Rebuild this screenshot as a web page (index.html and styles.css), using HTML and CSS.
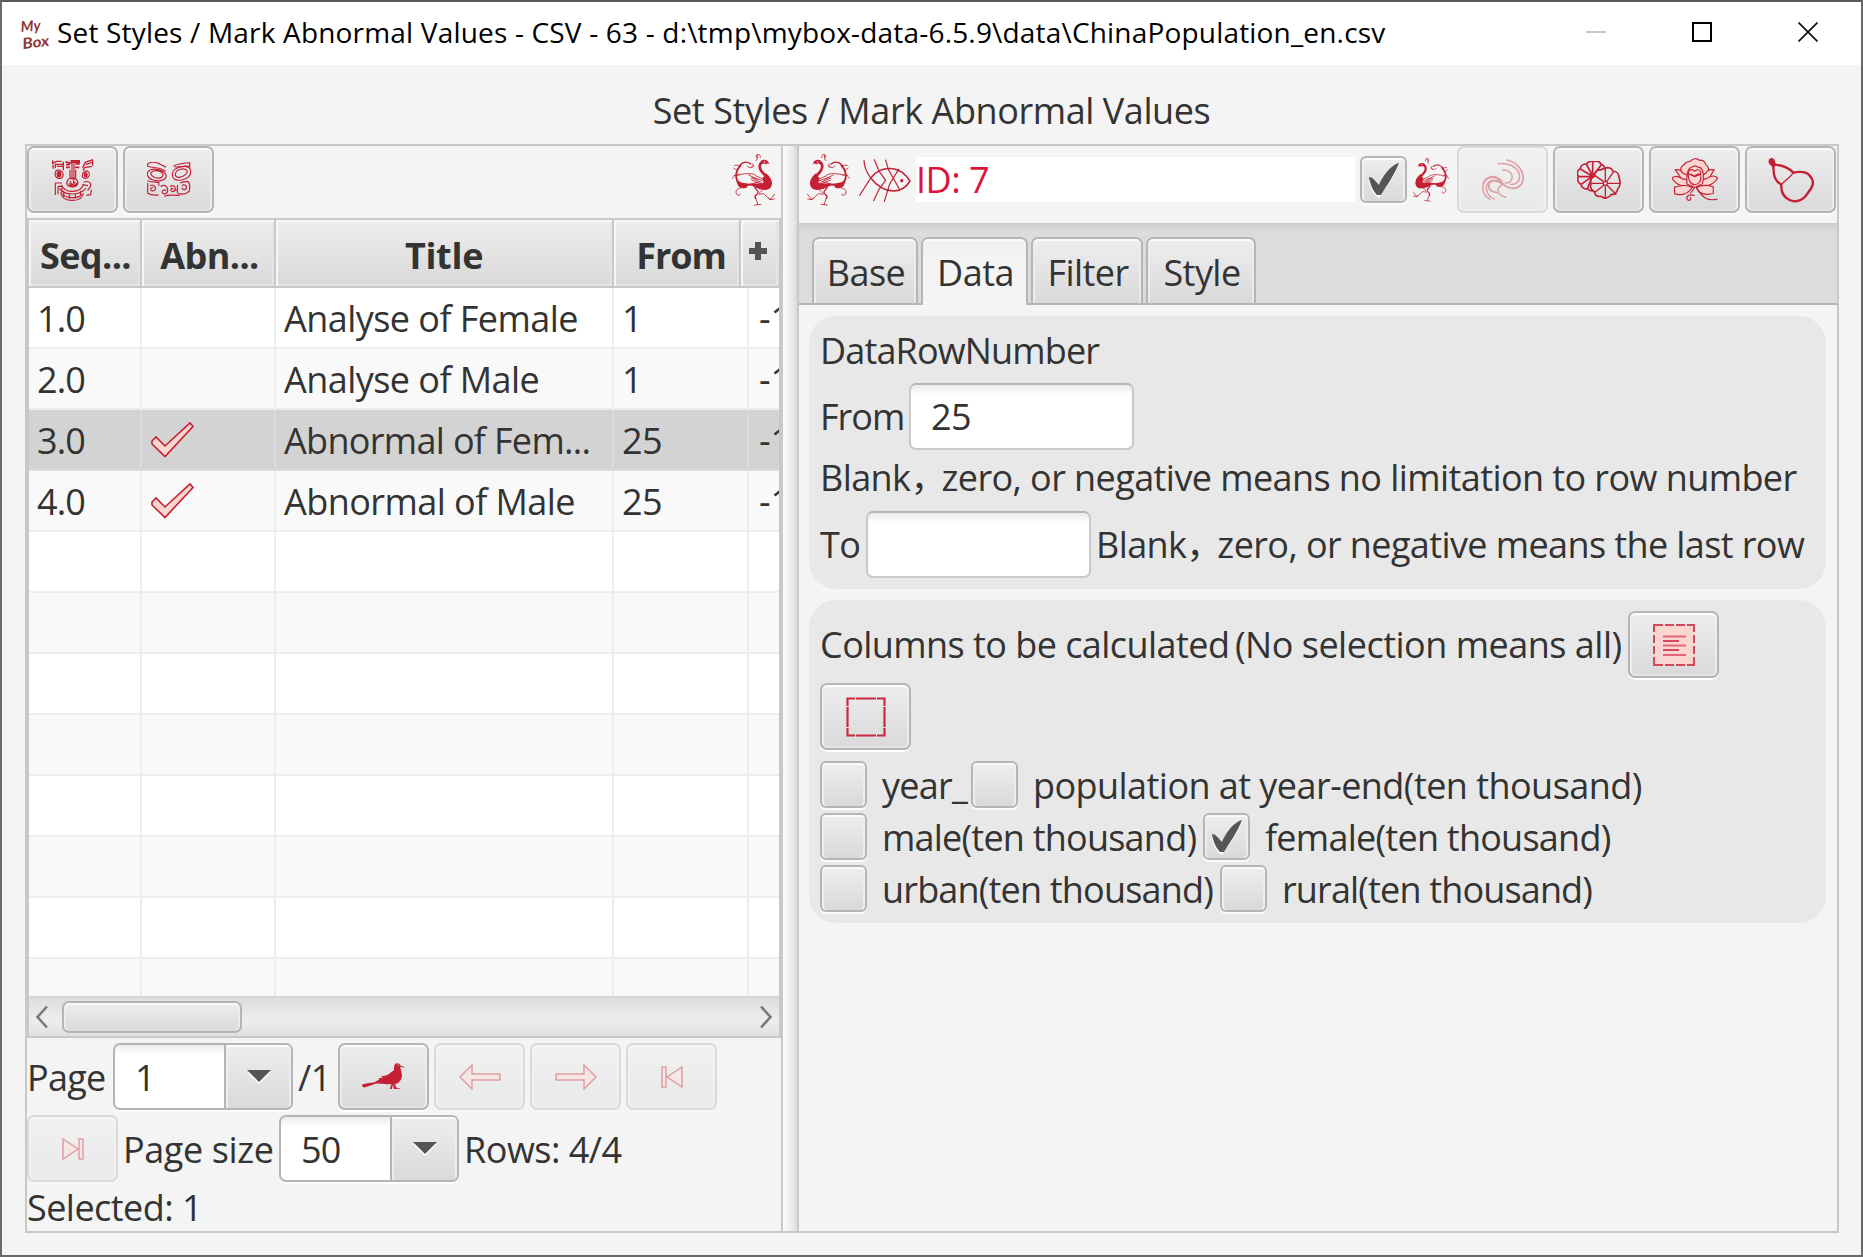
FILE: index.html
```html
<!DOCTYPE html>
<html lang="en">
<head>
<meta charset="utf-8">
<title>Set Styles / Mark Abnormal Values</title>
<link rel="stylesheet" href="styles.css">
</head>
<body>
<svg class="defs" width="0" height="0">
  <defs>
    <symbol id="phoenix" viewBox="0 0 128 156">
      <g fill="none" stroke="#c41f33" stroke-linecap="round">
        <path stroke-width="2.6" d="M44 11c-3-6 3-11 9-9 5 2 4 8 0 10M51 2c4 5-2 11 5 18M18 29l10-7 10 3M66 35c3 8 12 8 17 1M70 40c-9 0-8-8-3-11"/>
        <path stroke-width="8" d="M37 24c11 6 10 17 4 26-6 9-14 14-18 24"/>
        <path stroke-width="4" d="M72 30c12-10 28-6 34 7"/>
        <path stroke-width="6" d="M103 34c13 14 17 34 8 52"/>
        <path stroke-width="6" d="M25 90c22 4 52-2 78 5"/>
        <path stroke-width="2.600" d="M104 37c4-3 10-4 16-3M113 50l10-8M102 102c14 0 19 14 10 21-5 3-9 0-8-3M107 64c8-5 17 3 20 9"/>
        <path stroke-width="2.600" d="M60 62c19-7 37-1 62 2M34 76l24-11M37 80l29-10M40 85l31-13M43 89l27-11M48 84l31 8M53 76l25-13"/>
        <path stroke-width="4" d="M60 100c-5 11-13 10-9 18 6 7 12 6 7 15"/>
        <path stroke-width="2.600" d="M58 130l-7 21 10 3M42 151l10 1M33 101c6 9 6 10 13 15M48 121l-14-2-20 18-13-16M14 137l-12-2M14 137l4-5"/>
      </g>
      <path fill="#c41f33" d="M18 25c5-8 16-10 24-4l2 10-8-3-10 3z M27 57c-17 13-23 31-15 43 8 12 30 8 44 1l16-7-22-4-16-3 3-16-4-3z M78 91c17-7 26-1 34-15 4 24-11 30-27 25z"/>
      <circle cx="31" cy="24" r="2" fill="#f4f4f4"/>
    </symbol>
    <symbol id="tick" viewBox="0 0 32 36"><path fill="#fff" d="M1 19c4-1 7 4 9 8C15 16 23 5 31 2c-4 11-12 23-20 34C6 33 2 26 1 19z"/><path fill="#555" d="M1 15c4 0 7 5 10 8C15 13 23 3 31 1c-4 11-12 22-18 32h-4C5 29 2 22 1 15z"/></symbol>
    <symbol id="mark" viewBox="0 0 46 38"><path fill="#fbd5d0" stroke="#c41f33" stroke-width="1.600" d="M2 20l4-4 9 9L40 2l3 3.500-28 30L2 23z"/></symbol>
    <symbol id="arrow" viewBox="0 0 42 26"><path fill="#fbd5d0" stroke="#c41f33" stroke-width="1.500" d="M1 13 13 1v9h28v6H13v9z"/></symbol>
    <symbol id="edge" viewBox="0 0 22 22"><path fill="#fbd5d0" stroke="#c41f33" stroke-width="1.500" d="M1 1h4v20H1zM21 1v20L6 11z"/></symbol>
  </defs>
</svg>

<div class="window">
  <header class="titlebar">
    <svg class="logo" viewBox="0 0 32 32" aria-hidden="true"><g font-family="Lato, sans-serif" font-style="italic" font-weight="700" fill="#8f3434"><text x="2" y="14" font-size="15" textLength="20" lengthAdjust="spacingAndGlyphs" transform="rotate(-4 2 14)">My</text><text x="4" y="31" font-size="15" textLength="27" lengthAdjust="spacingAndGlyphs" transform="rotate(-7 4 31)">Box</text></g></svg>
    <span class="caption">Set Styles / Mark Abnormal Values - CSV - 63 - d:\tmp\mybox-data-6.5.9\data\ChinaPopulation_en.csv</span>
    <div class="window-buttons">
      <svg viewBox="0 0 20 20"><path d="M0 10h20" stroke="#c8c8c8" stroke-width="2"/></svg>
      <svg viewBox="0 0 20 20"><path d="M1 1h18v18H1z" fill="none" stroke="#000" stroke-width="2"/></svg>
      <svg viewBox="0 0 20 20"><path d="M.5.5l19 19M19.500.5l-19 19" stroke="#111" stroke-width="1.700"/></svg>
    </div>
  </header>
  <h1 class="heading">Set Styles / Mark Abnormal Values</h1>

  <main class="split">
    <section class="left">
      <div class="toolbar">
        <button class="btn"><svg width="42" height="42" viewBox="0 0 126 126"><g fill="none" stroke="#c41f33" stroke-width="4">
          <path d="M2 4v9l12-6h15M3 17v12M10 14v14M12 16h20M14 22h18M34 8v26M123 2l-23 8-8 16M122 9l-20 8M120 22l-22 4-5 8M122 4v16"/>
          <path stroke-width="5" d="M40 10c8-4 10 5 17 2s14-6 27 1M42 17h12M42 25h12M70 15h13M68 25h14"/>
          <path stroke-width="3.500" d="M54 32v28M60 14v48M66 14v48M71 32v26M48 62c-8 12-2 20 12 22 15 1 22-12 14-22-4-5-20-7-26 0zM54 66l6 12 10-9M66 61l-3 19"/>
          <path stroke-width="3.500" d="M10 36c10-6 20-2 23 8 2 12-8 18-18 12-6-4-7-12-3-20M91 50c0-12 10-18 18-12 7 7 2 18-7 20-8 0-11-4-11-8"/>
          <path stroke-width="3.500" d="M10 72h20M10 72v36M18 82h12v20M18 82v24M95 70c15-7 25 3 20 13l-8 11M91 77l17 3M118 92l-2 15-13 2"/>
          <path stroke-width="3.500" d="M28 78c8 17 20 20 34 19 16 0 26-4 32-19M22 88c10 16 26 17 40 17s28-4 40-17M26 100c4 20 22 25 36 24 16 0 30-6 32-22M32 105c8 10 18 11 30 11s22-2 27-10M35 96v17M52 103v16M70 103v15M86 96v15"/></g><g fill="#c41f33"><ellipse cx="21" cy="46" rx="7" ry="10"/><ellipse cx="101" cy="47" rx="6" ry="8"/><path d="M52 70l10 10 14-10v10l-12 5-12-4zM55 3h29v10H57z"/></g></svg></button>
        <button class="btn"><svg width="44" height="35" viewBox="0 0 130 103"><g fill="none" stroke="#c41f33" stroke-width="3.500">
          <path d="M2 14V5C12-1 28 0 42 8l14 7M3 13l36 6 16 8M78 12c13-8 31-9 48-10v14M82 14c14 3 29-5 43-1"/>
          <path d="M3 28c12-14 50-5 54 13-2 16-28 18-44 10C2 47-1 36 3 28zM13 30c10-9 33-4 34 8-1 11-16 12-27 6-8-4-11-10-7-14M75 34c5-22 47-28 53-12 4 18-7 28-26 31-19 3-29-4-27-19zM84 34c3-13 26-18 33-10 7 8-9 20-22 21-10 1-12-6-11-11"/>
          <path d="M1 55c11 6 26 3 34 5v10M2 62v30c10 6 24 6 32 5M9 70c8-6 18 2 16 10-3 8-14 6-14 0 0-4 5-6 8-4M40 72c12-7 22 0 21 13-1 10-15 12-16 4 0-7 8-9 11-4M68 72c8-6 17 0 15 9-4 11-14 6-12-1 1-4 6-3 6 1M90 68v24M83 84l9-3M92 93c12 3 26 0 34-8M103 69c8-4 16 0 13 8-4 8-14 4-12-2M119 56c8 5 8 18 6 28M98 62c8-5 17-4 24-4M51 101c14-6 28-2 47-3"/></g></svg></button>
        <svg class="bird flip push" width="43" height="52"><use href="#phoenix"/></svg>
      </div>
      <div class="table">
        <div class="thead"><div class="th c1">Seq...</div><div class="th c2">Abn...</div><div class="th c3">Title</div><div class="th c4">From</div><div class="th c5"><svg width="18" height="18"><path d="M9 0v18M0 9h18" stroke="#555" stroke-width="6"/></svg></div></div>
        <div class="tbody">
          <div class="tr"><div class="td c1">1.0</div><div class="td c2"></div><div class="td c3">Analyse of Female</div><div class="td c4">1</div><div class="td c5">-1</div></div>
          <div class="tr"><div class="td c1">2.0</div><div class="td c2"></div><div class="td c3">Analyse of Male</div><div class="td c4">1</div><div class="td c5">-1</div></div>
          <div class="tr selected"><div class="td c1">3.0</div><div class="td c2"><svg width="46" height="38"><use href="#mark"/></svg></div><div class="td c3 cut">Abnormal of Fem...</div><div class="td c4">25</div><div class="td c5">-1</div></div>
          <div class="tr"><div class="td c1">4.0</div><div class="td c2"><svg width="46" height="38"><use href="#mark"/></svg></div><div class="td c3">Abnormal of Male</div><div class="td c4">25</div><div class="td c5">-1</div></div>
          <div class="tr"><div class="td c1"></div><div class="td c2"></div><div class="td c3"></div><div class="td c4"></div><div class="td c5"></div></div>
          <div class="tr"><div class="td c1"></div><div class="td c2"></div><div class="td c3"></div><div class="td c4"></div><div class="td c5"></div></div>
          <div class="tr"><div class="td c1"></div><div class="td c2"></div><div class="td c3"></div><div class="td c4"></div><div class="td c5"></div></div>
          <div class="tr"><div class="td c1"></div><div class="td c2"></div><div class="td c3"></div><div class="td c4"></div><div class="td c5"></div></div>
          <div class="tr"><div class="td c1"></div><div class="td c2"></div><div class="td c3"></div><div class="td c4"></div><div class="td c5"></div></div>
          <div class="tr"><div class="td c1"></div><div class="td c2"></div><div class="td c3"></div><div class="td c4"></div><div class="td c5"></div></div>
          <div class="tr"><div class="td c1"></div><div class="td c2"></div><div class="td c3"></div><div class="td c4"></div><div class="td c5"></div></div>
          <div class="tr"><div class="td c1"></div><div class="td c2"></div><div class="td c3"></div><div class="td c4"></div><div class="td c5"></div></div>
        </div>
        <div class="scrollbar">
          <svg width="12" height="24"><path d="M11 1.500 1.500 12 11 22.500" fill="none" stroke="#777" stroke-width="2.500"/></svg>
          <div class="thumb"></div>
          <svg width="12" height="24"><path d="M1 1.500 10.500 12 1 22.500" fill="none" stroke="#777" stroke-width="2.500"/></svg>
        </div>
      </div>
      <div class="pager">
        <div class="line">
          <span class="label page">Page</span>
          <div class="combo"><span>1</span><i><svg width="24" height="14"><path d="M0 2h24L12 14z" fill="#fff"/><path d="M0 0h24L12 12z" fill="#555"/></svg></i></div>
          <span class="label total">/1</span>
          <button class="btn"><svg width="44" height="27" viewBox="0 0 130 78"><path fill="#c41f33" d="M0 63l12-3 25-4 14-8-3-2 14-5-7-2 18-4c10-4 13-10 21-14 2-6-1-14 4-19 5-4 14-2 15 4l17 8-17-4c2 12 7 22 4 34-4 10-11 16-20 18l6 12h10l-2 2H94l-2-14-4 14h-6l5-15c-15 2-30-1-45-1L10 71c-6 1-10-1-10-8z"/><circle cx="107" cy="5" r="1.500" fill="#eee"/></svg></button>
          <button class="btn" disabled><svg width="42" height="26"><use href="#arrow"/></svg></button>
          <button class="btn" disabled><svg class="flip" width="42" height="26"><use href="#arrow"/></svg></button>
          <button class="btn" disabled><svg width="22" height="22"><use href="#edge"/></svg></button>
        </div>
        <div class="line">
          <button class="btn" disabled><svg class="flip" width="22" height="22"><use href="#edge"/></svg></button>
          <span class="label size">Page size</span>
          <div class="combo"><span>50</span><i><svg width="24" height="14"><path d="M0 2h24L12 14z" fill="#fff"/><path d="M0 0h24L12 12z" fill="#555"/></svg></i></div>
          <span class="label rows">Rows: 4/4</span>
        </div>
        <div class="status">Selected: 1</div>
      </div>
    </section>
    <div class="divider"></div>

    <section class="right">
      <div class="idbar">
        <svg class="bird" width="43" height="52"><use href="#phoenix"/></svg>
        <svg class="fish" width="52" height="44" viewBox="0 0 156 132"><g fill="none" stroke="#c41f33" stroke-linecap="round"><path stroke-width="4.500" d="M35 57C50 37 75 27 102 29c25 3 39 18 51 37-12 20-29 30-50 30-27 0-50-16-68-39z"/><path stroke-width="3.500" d="M15 4c0 22 7 35 20 53L2 109M46 2l15 36 19 26-20 27-16 34M80 3l8 28 33 59M119 31L92 75l-16 53"/></g><circle cx="128" cy="65" r="5" fill="#c41f33"/></svg>
        <div class="idtext">ID: 7</div>
        <span class="check"><svg width="32" height="36"><use href="#tick"/></svg></span>
        <svg class="smallbird" width="36" height="44"><use href="#phoenix"/></svg>
        <button class="btn" disabled><svg width="42" height="42" viewBox="0 0 126 126"><g fill="none" stroke="#c41f33" stroke-width="4.500" stroke-linecap="round"><path stroke-width="5" d="M74 3c35 7 55 38 48 63-4 20-27 27-46 18-14-7-25-21-43-18-15 4-17 22-4 30l15 5"/><path d="M48 14c31-4 59 10 64 33 4 18-8 31-26 29M62 33c19-2 33 11 27 28-3 8-11 12-20 10M62 73c-22-28-50-19-58 3-5 18 3 37 20 45M59 66C38 43 12 53 3 73M52 69c-20-13-39 0-39 18 0 15 10 28 24 33M65 76c-13 3-22 16-14 28 5 7 12 9 20 11"/></g></svg></button>
        <button class="btn"><svg width="44" height="38" viewBox="0 0 132 114"><g fill="none" stroke="#c41f33" stroke-width="5"><path d="M49 2c9-3 19-1 24 8 9 3 10 9 12 15M49 2c-8-3-17 1-20 7-11-1-18 6-19 14-10 5-11 16-6 23-5 11 0 20 8 24 1 10 12 16 20 13 5 8 13 7 17 4M47 3v45M28 9l19 36M10 24l34 20M4 47h42M12 70l30-21M31 84l13-33M74 10L50 42"/><path d="M84 22c10-5 20-1 24 8 11 1 18 9 18 19 5 12 4 28-4 35-2 15-13 17-19 16-8 13-22 14-30 6-14 2-20-4-21-14-11-3-13-16-10-24-4-12 3-20 10-22 1-15 9-20 19-19 4-3 9-5 13-5z"/><circle cx="85" cy="67" r="6" stroke-width="4"/><path stroke-width="4" d="M85 61V22M89 62l21-30M92 67h38M90 72l28 29M85 73v37M81 72l-27 22M78 67H43M80 62L53 43"/></g></svg></button>
        <button class="btn"><svg width="46" height="44" viewBox="0 0 136 128"><g fill="#fbd5d0" stroke="#c41f33" stroke-width="3.400" stroke-linejoin="round"><path d="M34 49C22 39 24 24 36 18c4-8 12-8 18-9 6-9 20-11 27-3 8-3 18 4 18 12 9 4 12 18 5 28L70 78z"/><path d="M50 75C26 70 22 46 9 34 20 32 28 37 31 43c10 2 20 12 24 30zM81 75c2-16 9-27 20-32 3-7 11-11 24-9-11 11-8 29-44 41z"/><path d="M60 83C38 86 11 80 0 58c9-8 21-4 29 2 16 1 26 10 31 23zM75 83c4-16 15-22 29-24 10-7 22-10 31-1-11 21-39 28-60 25z"/><path d="M60 86c-14 22-37 24-52 19l-1-20c17-5 37-8 53 1zM72 86c16-8 35-7 50-2v20c-22 5-43 1-50-18z"/><path d="M44 76c-1-21-1-35 7-46l16-8 19 7c8 11 8 30 4 46l-23 11z"/><path d="M48 47c7-2 12 1 18 6 8-7 13-8 19-5 3 17-5 29-17 30-13 0-21-14-20-31zM48 45c0-10 7-14 15-10l4 3 7-4c9-2 12 7 10 13l-17 7z"/></g><path fill="none" stroke="#c41f33" stroke-width="3.400" d="M66 85c0 9-7 10-12 19M72 85c7 13 14 26 29 34 12 6 22 4 34 1M67 110c-18-6-27 3-22 12 8 6 14-3 8-7"/></svg></button>
        <button class="btn"><svg width="46" height="46" viewBox="0 0 138 138"><g fill="none" stroke="#c41f33" stroke-linejoin="round"><path stroke-width="7" d="M15 23c20 0 41 3 61 24 20-5 41-2 49 9 13 14 11 29 3 40l-15 21c-9 11-24 16-35 16-17-1-35-17-37-34l-2-17C27 76 20 62 18 52z"/><path stroke-width="4" d="M41 82c11-12 19-15 36-35"/></g><path fill="#c41f33" d="M3 7l8-5 8 5 4 13-5 13-9-7c-7-4-9-13-6-19z"/></svg></button>
      </div>

      <nav class="tabs"><div class="tab t1">Base</div><div class="tab t2 active">Data</div><div class="tab t3">Filter</div><div class="tab t4">Style</div></nav>

      <div class="content">
        <div class="card rownums">
          <div class="row r1">DataRowNumber</div>
          <div class="row r2"><span class="from">From</span><div class="field">25</div></div>
          <div class="row r3"><span>Blank<span class="comma">，</span>zero, or negative means no limitation to row number</span></div>
          <div class="row r4"><span class="to">To</span><div class="field"></div><span class="last">Blank<span class="comma">，</span>zero, or negative means the last row</span></div>
        </div>
        <div class="card columns">
          <div class="row head"><span class="calc">Columns to be calculated</span><span class="hint">(No selection means all)</span>
            <button class="btn"><svg width="42" height="42"><path d="M1 1h40v40H1z" fill="#fbd5d0"/><path d="M1 8V1h9M12 1h9M23 1h9M34 1h7v7M41 11v8M41 22v8M41 33v8h-7M32 41h-9M21 41h-9M10 41H1v-8M1 30v-8M1 19v-8" fill="none" stroke="#d1495b" stroke-width="2"/><path d="M10 12.500h23M10 21.500h23M10 31h23" stroke="#df6672" stroke-width="2"/><path d="M10 17h16M10 26h16" stroke="#c41f33" stroke-width="1.300"/></svg></button>
          </div>
          <div class="row single"><button class="btn"><svg width="40" height="40"><path d="M1.500 9V1.500H9M10 1.500h20M31 1.500h7.500V9M38.500 10v20M38.500 31v7.500H31M30 38.500H10M9 38.500H1.500V31M1.500 30V10" fill="none" stroke="#c92a3e" stroke-width="2.200"/></svg></button></div>
          <div class="row opt"><span class="check"></span><span class="name year">year_</span><span class="check"></span><span class="name pop">population at year-end(ten thousand)</span></div>
          <div class="row opt"><span class="check"></span><span class="name male">male(ten thousand)</span><span class="check"><svg width="32" height="36"><use href="#tick"/></svg></span><span class="name">female(ten thousand)</span></div>
          <div class="row opt"><span class="check"></span><span class="name urban">urban(ten thousand)</span><span class="check"></span><span class="name rural">rural(ten thousand)</span></div>
        </div>
      </div>
    </section>
  </main>
</div>
</body>
</html>
```
FILE: styles.css
```css
* { box-sizing: border-box; }
body { margin: 0; }
.defs { display: block; }
.window {
  width: 1863px; height: 1257px; overflow: hidden;
  border: 2px solid #6b6969; border-top-color: #5c5a5a;
  background: #f4f4f4; color: #333;
  display: flex; flex-direction: column;
  font: 36px/48px "Open Sans", "Noto Sans CJK SC", sans-serif;
  letter-spacing: -.55px; white-space: nowrap;
}
svg { display: block; flex: none; }
.flip { transform: scaleX(-1); }

.titlebar { height: 63px; background: #fff; color: #000; display: flex; align-items: center; padding: 0 43px 3px 17px; }
.logo { width: 32px; height: 32px; margin-top: 3px; overflow: visible; letter-spacing: 0; }
.caption { margin-left: 6px; font-size: 28px; letter-spacing: .18px; }
.window-buttons { margin-left: auto; display: flex; gap: 86px; }
.window-buttons svg { width: 20px; height: 20px; }
.heading { height: 79px; margin: 0; padding-top: 21px; font-size: 36px; font-weight: 400; text-align: center; letter-spacing: -.42px; line-height: 50px; }

.split { width: 1814px; height: 1089px; margin-left: 23px; border: 2px solid #c8c8c8; display: flex; }
.left { width: 756px; height: 1085px; border-right: 2px solid #c8c8c8; display: flex; flex-direction: column; }
.divider { width: 14px; background: linear-gradient(90deg, #fbfbfb, #e9e9e9 70%, #dadada); }
.right { flex: 1; min-width: 0; border-left: 2px solid #c8c8c8; }

.btn {
  flex: none; width: 91px; height: 67px; padding: 0; display: flex; align-items: center; justify-content: center;
  border: 2px solid #b5b5b5; border-radius: 7px;
  background: linear-gradient(#eeeeee, #d9d9d9);
  box-shadow: inset 0 2px #fbfbfb, inset 2px 0 #ededed, inset -2px 0 #ededed, inset 0 -2px #e3e3e3, 0 2px #fcfcfc;
}
.btn:disabled { opacity: .4; }
.toolbar { height: 72px; flex: none; display: flex; gap: 5px; }
.bird { margin-top: 8px; }
.push { margin-left: auto; margin-right: 6px; }

.table { height: 820px; flex: none; border: 2px solid #c8c8c8; display: flex; flex-direction: column; background: #fff; }
.thead { display: flex; height: 68px; border-bottom: 2px solid #c8c8c8; background: linear-gradient(#eeeeee, #d9d9d9); flex: none; }
.th { height: 66px; display: flex; align-items: center; justify-content: center; font-weight: 700; border-right: 2px solid #c8c8c8; box-shadow: inset 2px 2px #f6f6f6, inset -2px -2px #e4e4e4; padding-top: 5px; letter-spacing: -.3px; }
.thead .c1 { width: 113px; padding-left: 2px; letter-spacing: -.6px; }
.thead .c2 { width: 134px; padding-left: 3px; letter-spacing: -.6px; }
.thead .c3 { width: 338px; }
.thead .c4 { width: 127px; padding-left: 9px; letter-spacing: -1px; }
.thead .c5 { width: 37px; padding: 0 4px 4px 0; border-right: 0; }
.tbody { height: 708px; overflow: hidden; }
.tr { height: 61px; display: flex; border-bottom: 2px solid #ededed; }
.tr:nth-child(even) { background: #f9f9f9; }
.td { display: flex; align-items: center; flex: none; border-right: 2px solid #ededed; padding: 3px 0 0 8px; }
.tbody .c1 { width: 113px; letter-spacing: -.9px; }
.tbody .c2 { width: 134px; padding-top: 1px; }
.tbody .c3 { width: 338px; letter-spacing: -.55px; }
.tbody .cut { letter-spacing: -.68px; }
.tbody .c4 { width: 135px; }
.tbody .c5 { width: 44px; border: 0; padding-left: 10px; letter-spacing: 0; }
.tr.selected { background: #d3d3d3; border-color: #dcdcdc; }
.selected .td { border-color: #dcdcdc; }
.scrollbar { height: 40px; flex: none; border-top: 2px solid #d4d4d4; background: linear-gradient(#dedede, #ededed 60%, #e0e0e0); display: flex; align-items: center; padding: 0 7px; }
.thumb { width: 180px; height: 32px; margin: 0 auto 0 14px; border: 2px solid #b5b5b5; border-radius: 7px; background: linear-gradient(#eeeeee, #d9d9d9); box-shadow: inset 0 2px #fafafa, inset 2px 0 #ececec, inset -2px 0 #ececec; }

.pager { padding-top: 3px; flex: none; }
.line { height: 72px; padding-top: 2px; display: flex; gap: 5px; }
.label { line-height: 69px; height: 67px; }
.page { width: 81px; letter-spacing: -.7px; }
.total { width: 35px; }
.size { width: 151px; letter-spacing: -.4px; }
.rows { letter-spacing: -.5px; }
.combo { width: 180px; height: 67px; display: flex; border: 2px solid #b5b5b5; border-radius: 7px; overflow: hidden; box-shadow: 0 2px #fcfcfc; background: linear-gradient(#ececec, #fff 10px); }
.combo span { flex: 1; padding-left: 20px; line-height: 65px; letter-spacing: -.9px; }
.combo i { width: 67px; border-left: 2px solid #b5b5b5; background: linear-gradient(#eeeeee, #d9d9d9); box-shadow: inset 0 2px #fbfbfb, inset 2px 0 #ededed, inset -2px 0 #ededed; display: flex; align-items: center; justify-content: center; }
.status { line-height: 46px; }

.idbar { height: 77px; display: flex; padding-left: 8px; }
.fish { margin: 13px 0 0 9px; }
.idtext { flex: none; width: 439px; height: 45px; margin: 11px 5px 0 5px; line-height: 46px; background: #fff; color: #dc143c; letter-spacing: -.5px; }
.check { flex: none; width: 47px; height: 47px; border: 2px solid #b5b5b5; border-radius: 6px; background: linear-gradient(#eeeeee, #d9d9d9); box-shadow: inset 0 2px #fafafa, inset 2px 0 #ededed, inset -2px 0 #ededed, 0 2px #fcfcfc; display: flex; align-items: center; justify-content: center; }
.idbar .check { margin-top: 10px; }
.smallbird { margin: 12px 8px 0 6px; }
.idbar .btn { margin-right: 5px; }
.idbar .btn:last-child { margin-right: 0; }
.tabs { height: 82px; padding: 14px 0 0 13px; border-bottom: 2px solid #b5b5b5; background: linear-gradient(#cdcdcd, #dcdcdc 10px); display: flex; gap: 3px; align-items: flex-start; }
.tab { height: 66px; border: 2px solid #b5b5b5; border-bottom: 0; border-radius: 7px 7px 0 0; background: linear-gradient(#eeeeee, #d9d9d9); box-shadow: inset 0 2px #fafafa, inset 2px 0 #ebebeb, inset -2px 0 #ebebeb; text-align: center; line-height: 67px; padding-left: 2px; }
.tab.active { height: 68px; background: linear-gradient(#eeeeee, #f4f4f4 20px); box-shadow: inset 0 2px #fafafa; }
.t1 { width: 106px; } .t2 { width: 107px; } .t3 { width: 112px; } .t4 { width: 110px; }

.content { padding: 11px 11px 0 10px; display: flex; flex-direction: column; gap: 11px; }
.card { background: #e8e8e8; border-radius: 27px; padding: 11px 0 0 11px; }
.rownums { height: 273px; }
.columns { height: 323px; }
.row { display: flex; align-items: center; }
.r1 { height: 49px; letter-spacing: -.85px; padding-bottom: 2px; }
.r2 { height: 78px; padding-top: 3px; }
.r3 { height: 45px; letter-spacing: -.58px; padding-top: 3px; }
.r4 { height: 88px; padding-top: 3px; }
.comma { letter-spacing: -5px; }
.from { width: 89px; letter-spacing: -1px; }
.to { width: 46px; }
.field { width: 225px; height: 67px; border: 2px solid #c8c8c8; border-top-color: #b5b5b5; border-radius: 7px; padding-left: 20px; line-height: 64px; background: linear-gradient(#ebebeb, #fff 10px); }
.last { padding-left: 5px; letter-spacing: -.6px; }
.head { height: 67px; }
.calc { width: 415px; letter-spacing: -.55px; padding-top: 1px; }
.hint { width: 393px; letter-spacing: -.5px; padding-top: 1px; }
.single { height: 83px; padding: 5px 0 11px; align-items: flex-start; }
.opt { height: 52px; align-items: flex-start; }
.name { padding-left: 15px; line-height: 49px; letter-spacing: -.75px; }
.year { width: 104px; }
.pop { letter-spacing: -.55px; }
.male { width: 336px; letter-spacing: -.78px; }
.urban { width: 353px; letter-spacing: -.82px; }
.rural { letter-spacing: -.85px; }
```
